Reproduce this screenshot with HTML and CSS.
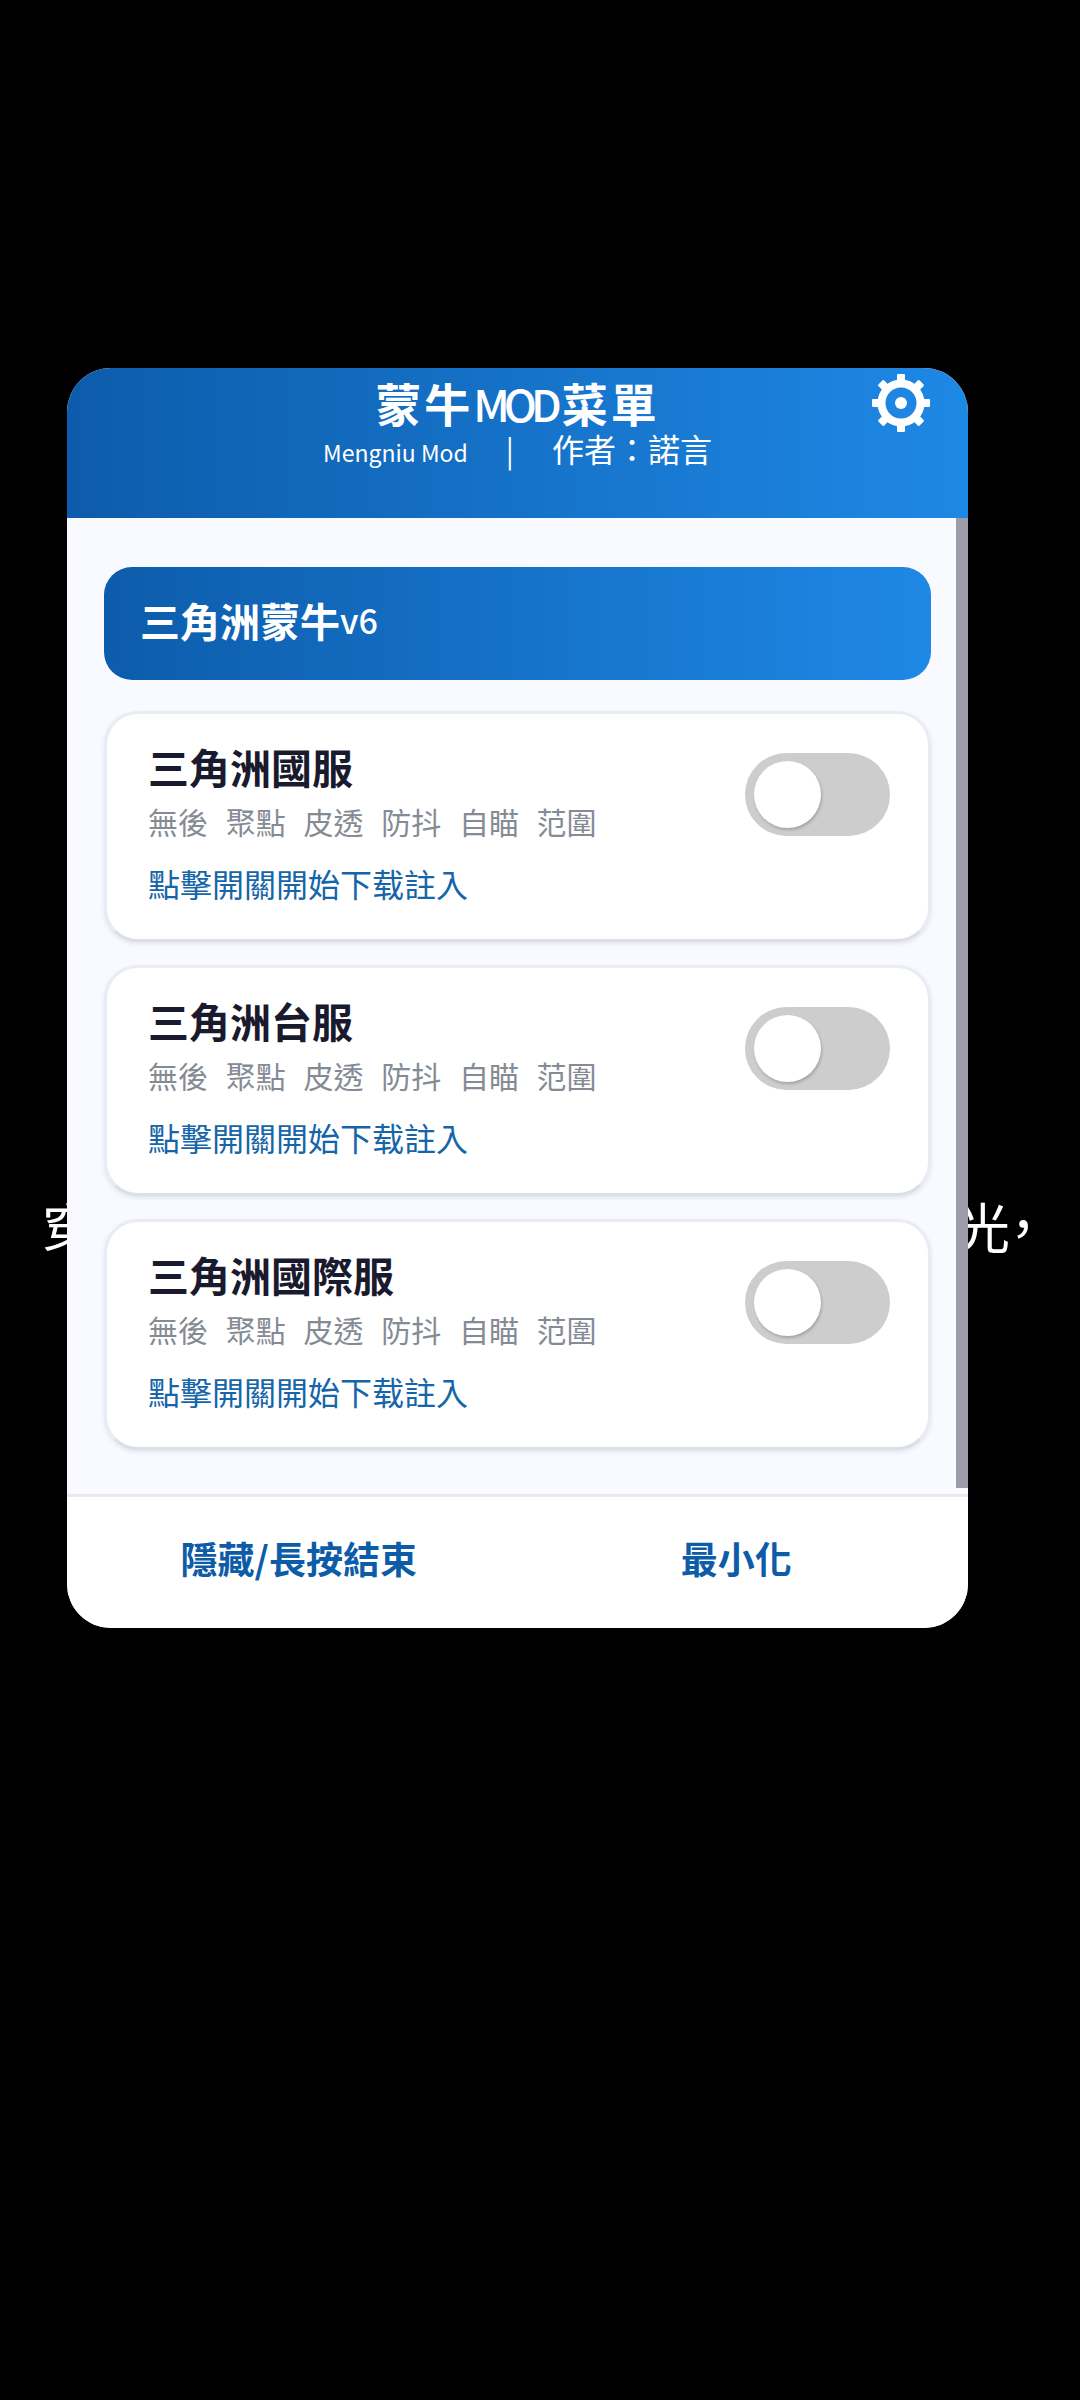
FILE: index.html
```html
<!DOCTYPE html>
<html lang="zh-TW">
<head>
    <meta charset="UTF-8">
    <meta name="viewport" content="width=device-width, initial-scale=1.0">
    <title>蒙牛MOD菜單</title>
    <link rel="stylesheet" href="styles.css">
</head>
<body>

    <!-- 背後的字幕，大部分被面板蓋住 -->
    <div class="behind-text">
        <span>穿</span>
        <span>光<span class="behind-comma">，</span></span>
    </div>

    <div class="panel">
        <div class="panel-header">
            <div class="title">蒙牛<span class="title-latin">MOD</span>菜單</div>
            <div class="subtitle"><span class="subtitle-latin">Mengniu Mod</span><span class="subtitle-bar">|</span>作者：諾言</div>
            <svg class="gear" viewBox="0 0 60 60" width="60" height="60">
                <g fill="#fff">
                    <rect x="26" y="1" width="8" height="58" rx="1"/>
                    <rect x="26" y="1" width="8" height="58" rx="1" transform="rotate(45 30 30)"/>
                    <rect x="26" y="1" width="8" height="58" rx="1" transform="rotate(90 30 30)"/>
                    <rect x="26" y="1" width="8" height="58" rx="1" transform="rotate(135 30 30)"/>
                </g>
                <circle cx="30" cy="30" r="19.5" fill="#1e85e2" stroke="#fff" stroke-width="8"/>
                <circle cx="30" cy="30" r="6" fill="#fff"/>
            </svg>
        </div>

        <div class="panel-body">
            <div class="banner">三角洲蒙牛<span class="banner-version">v6</span></div>

            <div class="card">
                <div class="card-text">
                    <div class="card-title">三角洲國服</div>
                    <div class="card-tags">無後 聚點 皮透 防抖 自瞄 范圍</div>
                    <div class="card-hint">點擊開關開始下载註入</div>
                </div>
                <div class="toggle"><div class="knob"></div></div>
            </div>

            <div class="card">
                <div class="card-text">
                    <div class="card-title">三角洲台服</div>
                    <div class="card-tags">無後 聚點 皮透 防抖 自瞄 范圍</div>
                    <div class="card-hint">點擊開關開始下载註入</div>
                </div>
                <div class="toggle"><div class="knob"></div></div>
            </div>

            <div class="card">
                <div class="card-text">
                    <div class="card-title">三角洲國際服</div>
                    <div class="card-tags">無後 聚點 皮透 防抖 自瞄 范圍</div>
                    <div class="card-hint">點擊開關開始下载註入</div>
                </div>
                <div class="toggle"><div class="knob"></div></div>
            </div>

            <div class="scrollbar"></div>
        </div>

        <div class="panel-footer">
            <div class="footer-btn">隱藏/長按結束</div>
            <div class="footer-btn">最小化</div>
        </div>
    </div>

</body>
</html>
```

FILE: styles.css
```css
* { box-sizing: border-box; }
html, body { margin: 0; }
body {
    position: relative;
    height: 2400px;
    padding: 368px 0 0 67px;
    background: #000;
    font-family: "Noto Sans CJK TC", "Noto Sans", sans-serif;
    overflow: hidden;
}

.behind-text {
    position: absolute;
    left: 42px;
    top: 1190px;
    width: 1008px;
    display: flex;
    justify-content: space-between;
    color: #fff;
    font-family: "Noto Sans CJK SC", sans-serif;
    font-size: 54px;
    line-height: 72px;
}
.behind-comma { margin-left: -14px; }

.panel {
    position: relative;
    width: 901px;
    height: 1260px;
    display: flex;
    flex-direction: column;
    border-radius: 44px;
    overflow: hidden;
    background: #fff;
}

.panel-header {
    position: relative;
    flex: 0 0 150px;
    padding-top: 6px;
    text-align: center;
    color: #fff;
    background: linear-gradient(to right, #0d5cab, #1e88e5);
}
.title { font-size: 46px; font-weight: 700; line-height: 56px; letter-spacing: 3px; }
.title-latin { font-weight: 500; font-size: 44px; letter-spacing: -6px; margin-right: 6px; }
.subtitle { font-size: 32px; line-height: 36px; margin-top: -1px; }
.subtitle-latin { font-size: 23px; }
.subtitle-bar { font-size: 30px; margin: 0 38px; }
.gear { position: absolute; top: 5px; right: 37px; }

.panel-body {
    position: relative;
    flex: 1;
    display: flex;
    flex-direction: column;
    gap: 23px;
    padding: 49px 37px 0;
    background: #f8faff;
}
.scrollbar {
    position: absolute;
    top: 0;
    right: 0;
    width: 12px;
    height: 970px;
    background: #9d9da9;
}

.banner {
    height: 113px;
    margin-bottom: 8px;
    padding: 0 0 8px 36px;
    display: flex;
    align-items: center;
    border-radius: 28px;
    color: #fff;
    font-size: 40px;
    font-weight: 700;
    background: linear-gradient(to right, #0d5cab, #1e88e5);
}
.banner-version { font-size: 34px; font-weight: 500; }

.card {
    height: 231px;
    padding: 28px 38px 0 41px;
    display: flex;
    justify-content: space-between;
    align-items: flex-start;
    background: #fff;
    border: 3px solid #e9ecf5;
    border-bottom-color: #dcdee8;
    border-radius: 34px;
    box-shadow: 0 2px 4px rgba(60, 70, 110, 0.12);
}
.card-title { color: #1a1a2e; font-size: 41px; font-weight: 700; line-height: 48px; }
.card-tags { color: #858b94; font-size: 30px; line-height: 40px; margin-top: 11px; word-spacing: 11px; }
.card-hint { color: #1565a8; font-size: 32px; line-height: 40px; margin-top: 22px; }

.toggle {
    width: 145px;
    height: 83px;
    margin-top: 11px;
    padding: 8px 0 0 9px;
    border-radius: 42px;
    background: #cdcdcd;
}
.knob {
    width: 67px;
    height: 67px;
    border-radius: 50%;
    background: #fff;
    box-shadow: 1px 2px 3px rgba(0, 0, 0, 0.2);
}

.panel-footer {
    flex: 0 0 134px;
    display: flex;
    padding: 0 13px;
    border-top: 3px solid #e8eaf0;
    background: #fff;
}
.footer-btn {
    flex: 1;
    display: flex;
    justify-content: center;
    align-items: center;
    padding-bottom: 10px;
    color: #0d5ca8;
    font-size: 37px;
    font-weight: 700;
}
```
